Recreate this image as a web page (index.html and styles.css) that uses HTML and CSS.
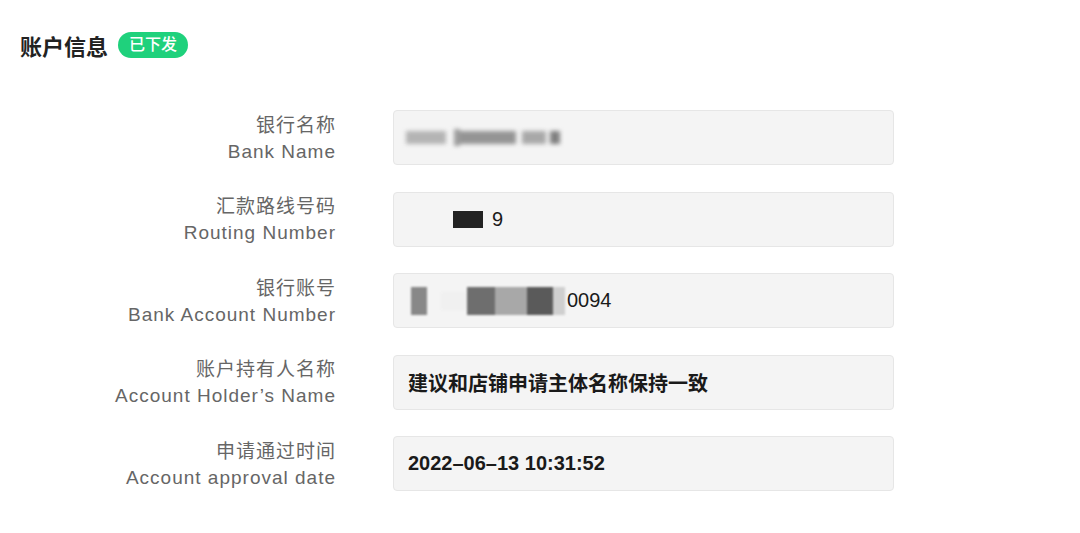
FILE: index.html
```html
<!DOCTYPE html>
<html lang="zh">
<head>
    <meta charset="UTF-8">
    <title>账户信息</title>
    <link rel="stylesheet" href="styles.css">
</head>
<body>
    <div class="header">
        <h1>账户信息</h1>
        <span class="badge">已下发</span>
    </div>

    <div class="form">
        <div class="row">
            <div class="label">
                <div>银行名称</div>
                <div>Bank Name</div>
            </div>
            <div class="field">
                <span class="mask mask-bank">
                    <i class="b1"></i><i class="b2"></i><i class="b3"></i><i class="b4"></i><i class="b5"></i>
                </span>
            </div>
        </div>

        <div class="row">
            <div class="label">
                <div>汇款路线号码</div>
                <div>Routing Number</div>
            </div>
            <div class="field field-routing">
                <span class="mask mask-routing"><i></i></span><span class="cut">9</span>
            </div>
        </div>

        <div class="row">
            <div class="label">
                <div>银行账号</div>
                <div>Bank Account Number</div>
            </div>
            <div class="field field-account">
                <span class="mask mask-account">
                    <i class="a1"></i><i class="a2"></i><i class="a3"></i><i class="a4"></i><i class="a6"></i><i class="a7"></i>
                </span><span class="cut">0094</span>
            </div>
        </div>

        <div class="row">
            <div class="label">
                <div>账户持有人名称</div>
                <div>Account Holder’s Name</div>
            </div>
            <div class="field">建议和店铺申请主体名称保持一致</div>
        </div>

        <div class="row">
            <div class="label">
                <div>申请通过时间</div>
                <div>Account approval date</div>
            </div>
            <div class="field">2022–06–13 10:31:52</div>
        </div>
    </div>
</body>
</html>
```

FILE: styles.css
```css
* {
    box-sizing: border-box;
}

body {
    margin: 0;
    padding: 30px 20px 0;
    font-family: "Liberation Sans", "Noto Sans CJK SC", sans-serif;
    background: #fff;
    color: #111;
}

.header {
    display: flex;
    align-items: center;
    gap: 10px;
    height: 30px;
}

.header h1 {
    margin: 0;
    font-size: 22px;
    font-weight: bold;
    color: #222;
}

.badge {
    display: inline-block;
    height: 26px;
    line-height: 26px;
    padding: 0 11px;
    border-radius: 13px;
    background: #1fd17c;
    color: #fff;
    font-size: 16px;
    font-weight: 500;
}

.form {
    margin-top: 50px;
    display: flex;
    flex-direction: column;
    gap: 26.5px;
}

.row {
    display: flex;
    align-items: center;
    gap: 57px;
}

.label {
    width: 316px;
    text-align: right;
    font-size: 19px;
    line-height: 26px;
    letter-spacing: 1px;
    color: #666;
    padding-top: 2px;
}

.field {
    width: 501px;
    height: 55px;
    display: flex;
    align-items: center;
    padding-left: 14px;
    background: #f4f4f4;
    border: 1px solid #e6e6e6;
    border-radius: 4px;
    font-size: 20px;
    font-weight: bold;
    color: #1a1a1a;
}

.mask {
    display: inline-flex;
    align-items: center;
}

.mask i {
    display: inline-block;
}

.mask-bank {
    margin-left: -2px;
    filter: blur(2px);
}

.mask-bank i {
    height: 13px;
    background: #a0a0a0;
}

.mask-bank .b1 { width: 40px; background: #b4b4b4; }
.mask-bank .b2 { width: 6px; margin-left: 8px; background: #9c9c9c; height: 17px; }
.mask-bank .b3 { width: 56px; background: #949494; }
.mask-bank .b4 { width: 24px; margin-left: 6px; background: #a8a8a8; }
.mask-bank .b5 { width: 10px; margin-left: 4px; background: #808080; }

.field-routing {
    padding-left: 59px;
}

.mask-routing i {
    width: 30px;
    height: 17px;
    background: #222;
    filter: blur(0.5px);
}

.cut {
    margin-left: 9px;
    font-weight: 500;
}

.field-account {
    padding-left: 17px;
}

.mask-account {
    filter: blur(0.8px);
}

.mask-account i {
    height: 28px;
}

.mask-account .a1 { width: 16px; background: #888; }
.mask-account .a2 { width: 26px; margin-left: 14px; background: #f0f0f0; height: 18px; }
.mask-account .a3 { width: 28px; background: #6e6e6e; }
.mask-account .a4 { width: 32px; background: #a8a8a8; }
.mask-account .a6 { width: 26px; background: #5a5a5a; }
.mask-account .a7 { width: 12px; background: #cfcfcf; }

.field-account .cut {
    margin-left: 2px;
}
```
